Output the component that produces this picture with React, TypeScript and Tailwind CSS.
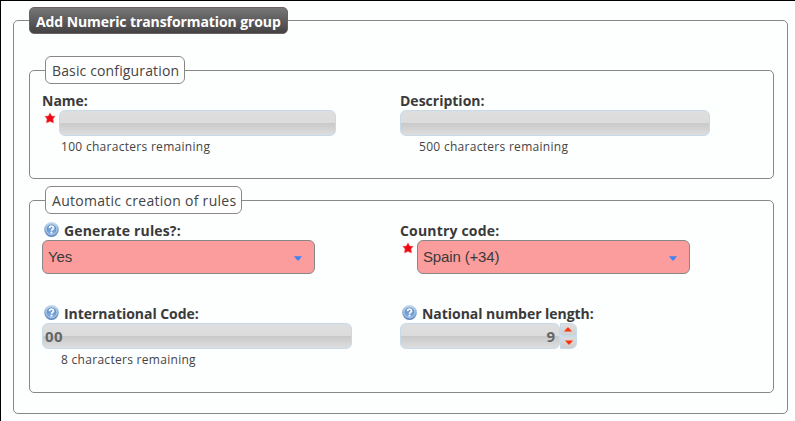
import type { ReactNode } from 'react'

const sans = "font-['Open_Sans','Noto_Sans',sans-serif]"
const inputLook =
  'h-[26px] rounded-[6px] border border-[#c5dbec] bg-[linear-gradient(to_bottom,#dedede_0%,#dcdcdc_49%,#c9c9c9_51%,#dedede_100%)]'

function Star() {
  return (
    <svg width="12" height="12" viewBox="0 0 12 12" className="ml-[2px] mt-[2px] shrink-0">
      <path
        d="M6 0.8 L7.7 3.9 L11.2 4.3 L9 7 L9.7 11 L6 9.6 L2.3 11 L3 7 L0.8 4.3 L4.3 3.9 Z"
        fill="#ee0a12"
        stroke="#f67a7a"
        strokeWidth="0.5"
      />
    </svg>
  )
}

function HelpIcon() {
  return (
    <svg width="16" height="16" viewBox="0 0 16 16" className="mr-1 ml-[2px] shrink-0">
      <defs>
        <linearGradient id="rim" x1="0" y1="0" x2="0" y2="1">
          <stop offset="0" stopColor="#c9dcf0" />
          <stop offset="1" stopColor="#5583bb" />
        </linearGradient>
        <linearGradient id="disc" x1="0" y1="0" x2="0" y2="1">
          <stop offset="0" stopColor="#4f80bf" />
          <stop offset="1" stopColor="#8ab4e2" />
        </linearGradient>
      </defs>
      <circle cx="7.5" cy="7.5" r="7.4" fill="url(#rim)" />
      <circle cx="7.5" cy="7.5" r="5.4" fill="url(#disc)" stroke="#b3cdea" strokeWidth="1" />
      <path
        d="M5.5 6.2 C5.5 3.4 9.6 3.5 9.5 5.9 C9.4 7.4 7.6 7.3 7.5 8.8"
        fill="none"
        stroke="#f4f8fd"
        strokeWidth="1.9"
      />
      <circle cx="7.5" cy="10.7" r="1.1" fill="#f4f8fd" />
    </svg>
  )
}

function Label({ text, help, tracking = '' }: { text: string; help?: boolean; tracking?: string }) {
  return (
    <div className="flex h-5 items-start">
      {help && (
        <span className="pt-[2px]">
          <HelpIcon />
        </span>
      )}
      <span className={`text-[14px] leading-[22px] font-bold whitespace-nowrap text-[#3a3a3a] ${tracking}`}>{text}</span>
    </div>
  )
}

function Remaining({ count }: { count: number }) {
  return (
    <div className="ml-[19px] text-[12px] leading-[22px] tracking-[0.29px] whitespace-nowrap text-[#444]">
      {count} characters remaining
    </div>
  )
}

function Select({ value }: { value: string }) {
  return (
    <div className="flex h-[34px] w-[273px] items-center justify-between rounded-[6px] border border-[#888] bg-[#fc9d9d] pr-[12px] pl-[5px] font-['Liberation_Sans',Arial,sans-serif] text-[15px] tracking-[-0.15px] text-[#3a3a3a]">
      <span>{value}</span>
      <svg width="8" height="5" viewBox="0 0 8 5" className="mt-[3px]">
        <path d="M0 0.2 H8 L4.6 4.6 H3.4 Z" fill="#3c83f5" />
      </svg>
    </div>
  )
}

function Group({ title, className, children }: { title: string; className: string; children: ReactNode }) {
  return (
    <fieldset className={`ml-[15px] w-[745px] rounded-[5px] border border-[#888] ${className}`}>
      <legend className="ml-[15px] h-7 rounded-[6px] border border-[#888] bg-white px-[6px] text-[14px] leading-[28px] whitespace-nowrap text-[#444]">
        {title}
      </legend>
      {children}
    </fieldset>
  )
}

function Spinner() {
  return (
    <div className="flex w-[17px] flex-col">
      <div className="flex h-[13px] items-center justify-center rounded-tr-[6px] border border-[#c5dbec] bg-linear-to-b from-[#dedede] to-[#d0d0d0]">
        <svg width="8" height="5" viewBox="0 0 8 5" className="mr-px">
          <path d="M0 4.5 H8 L4.5 0.5 H3.5 Z" fill="#fb3210" />
        </svg>
      </div>
      <div className="flex h-[13px] items-center justify-center rounded-br-[6px] border border-[#c5dbec] bg-linear-to-b from-[#dcdcdc] to-[#cdcdcd]">
        <svg width="8" height="5" viewBox="0 0 8 5" className="ml-px">
          <path d="M0 0.5 H8 L4.5 4.5 H3.5 Z" fill="#fb3210" />
        </svg>
      </div>
    </div>
  )
}

export default function App() {
  return (
    <div className={`h-[421px] w-[795px] overflow-hidden border-t border-l border-black bg-[#fdfefe] ${sans}`}>
      <fieldset className="mt-[6px] ml-[12px] h-[407px] w-[775px] rounded-[5px] border border-[#888]">
        <legend className="ml-[15px] h-[27px] w-[259px] rounded-[5px] border border-[#6b6063] bg-linear-to-b from-[#777] to-[#454243] pl-[6px] text-[14px] leading-[28px] font-bold tracking-[-0.09px] whitespace-nowrap text-white">
          Add Numeric transformation group
        </legend>

        <Group title="Basic configuration" className="mt-[22px] h-[123px] [&>legend]:w-[140px] [&>legend]:tracking-[0.14px]">
          <div className="flex pt-[6px] pl-[12px]">
            <div className="w-[358px]">
              <Label text="Name:" />
              <div className="flex">
                <Star />
                <div className={`ml-[3px] w-[277px] ${inputLook}`} />
              </div>
              <Remaining count={100} />
            </div>
            <div>
              <Label text="Description:" />
              <div className={`w-[310px] ${inputLook}`} />
              <Remaining count={500} />
            </div>
          </div>
        </Group>

        <Group
          title="Automatic creation of rules"
          className="mt-[7px] h-[207px] [&>legend]:w-[197px] [&>legend]:tracking-[0.28px]"
        >
          <div className="flex pt-[6px] pl-[12px]">
            <div className="w-[358px]">
              <Label text="Generate rules?:" help tracking="tracking-[0.15px]" />
              <Select value="Yes" />
            </div>
            <div>
              <Label text="Country code:" tracking="tracking-[0.18px]" />
              <div className="flex">
                <Star />
                <div className="ml-[3px]">
                  <Select value="Spain (+34)" />
                </div>
              </div>
            </div>
          </div>
          <div className="flex pt-[29px] pl-[12px]">
            <div className="w-[358px]">
              <Label text="International Code:" help tracking="tracking-[-0.04px]" />
              <div className={`w-[310px] pl-[2px] text-[15px] leading-[25px] font-bold text-[#666] ${inputLook}`}>
                <span className="tracking-[0.5px]">00</span>
              </div>
              <Remaining count={8} />
            </div>
            <div>
              <Label text="National number length:" help tracking="tracking-[-0.04px]" />
              <div className="flex">
                <div
                  className={`w-[160px] pr-[4px] text-right text-[15px] leading-[25px] font-bold text-[#666] ${inputLook}`}
                >
                  9
                </div>
                <Spinner />
              </div>
            </div>
          </div>
        </Group>
      </fieldset>
    </div>
  )
}
